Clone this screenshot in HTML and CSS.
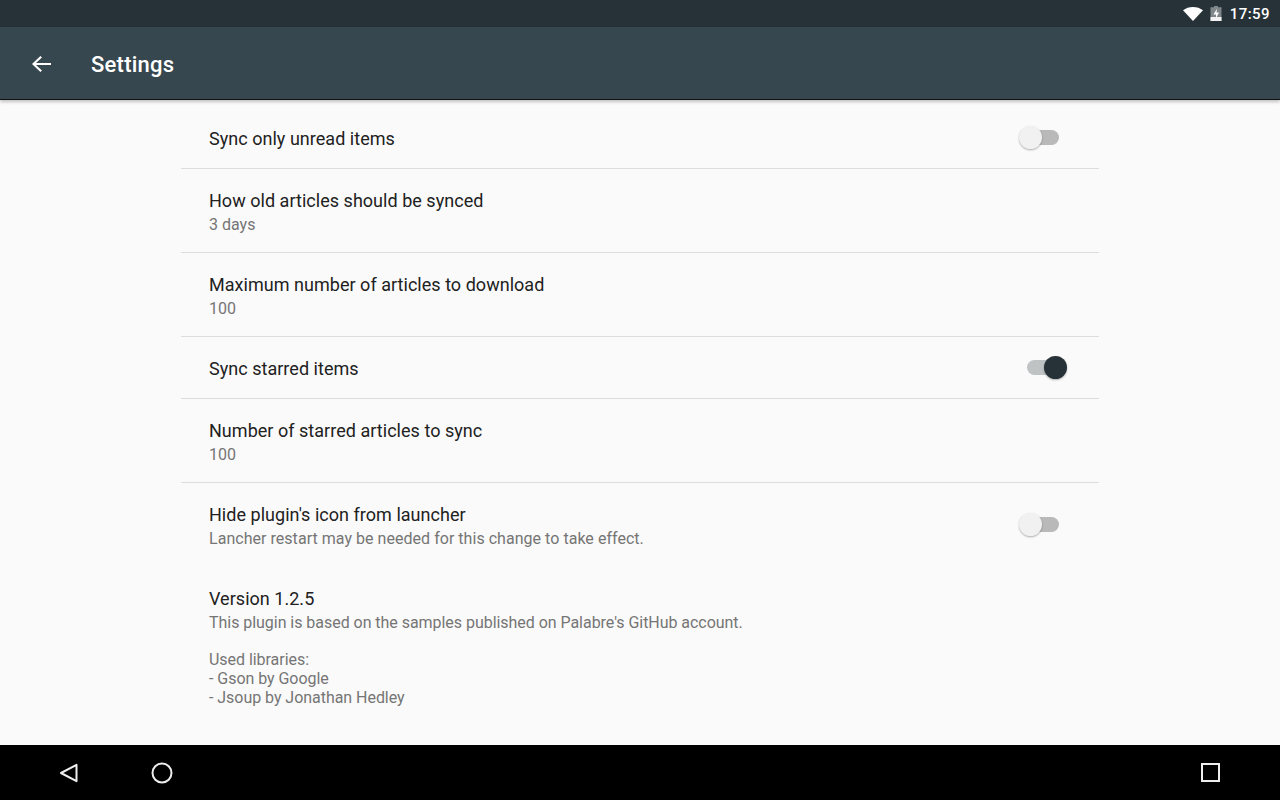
FILE: index.html
```html
<!DOCTYPE html>
<html lang="en">
<head>
<meta charset="utf-8">
<title>Settings</title>
<link rel="stylesheet" href="styles.css">
</head>
<body>
<div class="screen">
  <div class="statusbar">
    <svg class="wifi" width="20" height="14" viewBox="0 0 20 15" preserveAspectRatio="none"><path d="M0 3.6C2.8 1.3 6.2 0 10 0s7.200 1.300 10 3.600L10 15z" fill="#fff"/></svg>
    <svg class="battery" width="12" height="15" viewBox="0 0 12 17" preserveAspectRatio="none"><path d="M4 0h4v1.500h3.500V17H.5V1.500H4z" fill="#80878a"/><path d="M.5 12.500h11V17H.5z" fill="#f2f2f2"/><path d="M7 3 3.500 9.500H6V14l3-6.500H6.500z" fill="#fff"/></svg>
    <span class="clock">17:59</span>
  </div>
  <header class="toolbar">
    <svg class="back" width="19" height="18" viewBox="0 0 18 18" preserveAspectRatio="none"><path d="M18 8H3.800l5.600-5.600L8 1 0 9l8 8 1.400-1.400L3.800 10H18z" fill="#fff"/></svg>
    <h1 class="title">Settings</h1>
  </header>
  <main class="content">
    <div class="list">
      <div class="row row-single">
        <div class="text"><div class="label">Sync only unread items</div></div>
        <div class="switch off"><span class="track"></span><span class="thumb"></span></div>
      </div>
      <div class="row row-double">
        <div class="text"><div class="label">How old articles should be synced</div><div class="sub">3 days</div></div>
      </div>
      <div class="row row-double">
        <div class="text"><div class="label">Maximum number of articles to download</div><div class="sub">100</div></div>
      </div>
      <div class="row row-single">
        <div class="text"><div class="label">Sync starred items</div></div>
        <div class="switch on"><span class="track"></span><span class="thumb"></span></div>
      </div>
      <div class="row row-double">
        <div class="text"><div class="label">Number of starred articles to sync</div><div class="sub">100</div></div>
      </div>
      <div class="row row-double row-last">
        <div class="text"><div class="label">Hide plugin's icon from launcher</div><div class="sub">Lancher restart may be needed for this change to take effect.</div></div>
        <div class="switch off"><span class="track"></span><span class="thumb"></span></div>
      </div>
      <div class="about">
        <div class="label">Version 1.2.5</div>
        <div class="sub">This plugin is based on the samples published on Palabre's GitHub account.</div>
        <div class="sub libs">Used libraries:<br>- Gson by Google<br>- Jsoup by Jonathan Hedley</div>
      </div>
    </div>
  </main>
  <nav class="navbar">
    <svg class="nav-back" width="20" height="20" viewBox="0 0 20 20"><path d="M17.500 1.800v16.400L2 10z" fill="none" stroke="#eee" stroke-width="2" stroke-linejoin="round"/></svg>
    <svg class="nav-home" width="22" height="22" viewBox="0 0 22 22"><circle cx="11" cy="11" r="9.500" fill="none" stroke="#eee" stroke-width="2"/></svg>
    <svg class="nav-recent" width="20" height="20" viewBox="0 0 20 20"><rect x="1" y="1" width="17" height="17" fill="none" stroke="#eee" stroke-width="2"/></svg>
  </nav>
</div>
</body>
</html>
```
FILE: styles.css
```css
html, body { margin: 0; padding: 0; }
body { width: 1280px; height: 800px; overflow: hidden; font-family: Roboto, sans-serif; }
.screen { width: 1280px; height: 800px; display: flex; flex-direction: column; background: #fafafa; }
.statusbar { height: 27px; flex: none; background: #263238; display: flex; align-items: center; justify-content: flex-end; color: #fff; padding-right: 10px; box-sizing: border-box; }
.wifi { margin-right: 7px; }
.battery { margin-right: 8px; }
.clock { font-size: 15px; font-weight: 500; letter-spacing: .45px; }
.toolbar { height: 70px; flex: none; background: #37474f; display: flex; align-items: center; padding: 2px 0 0 32px; border-bottom: 1px solid #111; position: relative; box-shadow: 0 2px 3px rgba(0,0,0,.22); z-index: 1; }
.back { margin-right: 40px; }
.title { margin: 0; font-size: 22px; font-weight: 500; letter-spacing: .25px; color: #fff; }
.content { flex: 1; min-height: 0; display: flex; justify-content: center; }
.list { width: 918px; }
.row { display: flex; align-items: center; justify-content: space-between; padding: 2px 32px 0 28px; border-bottom: 1px solid #ddd; box-sizing: border-box; }
.row-single { height: 62px; padding-top: 0; }
.row-single .text { padding-top: 2px; }
.row:first-child { height: 69px; padding-top: 8px; }
.row-double { height: 84px; }
.row-double .sub { margin-top: 2px; }
.row-last { border-bottom: 0; height: 84px; padding-top: 0; }
.row-last .sub { letter-spacing: .035px; }
.label { font-size: 18px; line-height: 24px; color: #212121; letter-spacing: .03px; }
.sub { font-size: 16px; line-height: 19px; color: #757575; }
.about { padding: 20px 28px 0; }
.about .sub { margin-top: 2px; letter-spacing: -.04px; }
.about .libs { margin-top: 18px; }
.switch { position: relative; width: 48px; height: 24px; flex: none; }
.track { position: absolute; top: 4px; height: 15px; border-radius: 8px; }
.off .track { left: 6px; width: 34px; background: #b9b9b9; }
.on .track { left: 8px; width: 32px; background: #bfc3c4; }
.thumb { position: absolute; top: 0; width: 23px; height: 23px; border-radius: 50%; box-shadow: 0 1px 2px rgba(0,0,0,.3); }
.off .thumb { left: 0; background: #f1f1f1; }
.on .thumb { right: 0; background: #263238; }
.navbar { height: 55px; flex: none; background: #000; display: flex; align-items: center; padding: 1px 59px 0; box-sizing: border-box; }
.nav-back { margin-right: 72px; }
.nav-recent { margin-left: auto; }
```
